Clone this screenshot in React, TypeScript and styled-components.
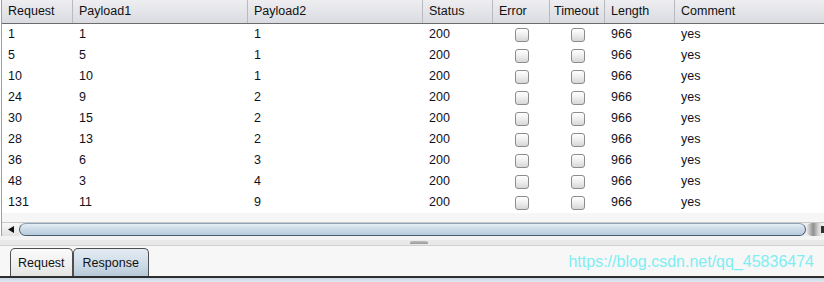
import React from "react";
import styled, { createGlobalStyle } from "styled-components";

const Global = createGlobalStyle`
  html, body { margin: 0; padding: 0; background: #ffffff; }
  body { width: 824px; height: 282px; overflow: hidden; font-family: "Liberation Sans", Arial, sans-serif; }
`;

const COLS = "71px 175px 175px 70px 57px 55px 70px 1fr";

const Page = styled.div`
  width: 824px;
  height: 282px;
  display: flex;
  flex-direction: column;
  background: #ffffff;
`;

const TablePanel = styled.div`
  margin-left: 1px;
  border-left: 1px solid #a0a0a0;
  display: flex;
  flex-direction: column;
  background: #f6f6f6;
  height: 236px;
`;

const HeaderRow = styled.div`
  display: grid;
  grid-template-columns: ${COLS};
  height: 23px;
  background: linear-gradient(#eeeef1 0%, #e4e5e9 50%, #dadbe1 100%);
  border-bottom: 1px solid #6b6b6b;
`;

const HeaderCell = styled.div<{ $tight?: boolean }>`
  box-sizing: border-box;
  border-right: 1px solid #b9b9c0;
  padding-left: ${(p) => (p.$tight ? "4px" : "6px")};
  font-size: 12.5px;
  line-height: 23px;
  color: #111;
  white-space: nowrap;
  overflow: hidden;
  &:last-child { border-right: none; }
`;

const Body = styled.div`
  background: #ffffff;
`;

const Row = styled.div`
  display: grid;
  grid-template-columns: ${COLS};
  height: 21px;
`;

const Cell = styled.div<{ $center?: boolean }>`
  padding-left: ${(p) => (p.$center ? "0" : "6px")};
  font-size: 12.5px;
  line-height: 21px;
  color: #10101c;
  display: flex;
  align-items: center;
  justify-content: ${(p) => (p.$center ? "center" : "flex-start")};
`;

const Check = styled.span`
  width: 12px;
  height: 12px;
  border: 1px solid #8c8c8c;
  border-radius: 3px;
  background: linear-gradient(#ffffff 0%, #eeeeee 50%, #d6d6d6 100%);
  box-sizing: content-box;
`;

const Spacer = styled.div`
  height: 9px;
  background: #f6f6f6;
`;

const Scrollbar = styled.div`
  height: 14px;
  display: flex;
  align-items: stretch;
  background: #ededed;
  border-top: 1px solid #c9c9c9;
`;

const ArrowBtn = styled.div`
  width: 17px;
  display: flex;
  align-items: center;
  justify-content: center;
  background: linear-gradient(#f8f8f8, #e2e2e2);
`;

const Thumb = styled.div`
  flex: 1;
  border: 1px solid #4a5c6e;
  border-top-color: #8fa3b6;
  border-radius: 9px;
  background: linear-gradient(#e4edf5 0%, #cddbe8 45%, #b8cbdc 100%);
`;

const RightCap = styled.div`
  width: 18px;
  display: flex;
  align-items: stretch;
  justify-content: flex-end;
  background: linear-gradient(90deg, #f0f0f0, #8f8f8f 40%, #d8d8d8 70%, #f4f4f4);
  border-radius: 6px 0 0 6px;
`;

const CapMark = styled.div`
  width: 3px;
  margin: 3px 0;
  background: #303030;
`;

const BottomPanel = styled.div`
  flex: 1;
  display: flex;
  flex-direction: column;
  background: #f5f5f5;
`;

const Divider = styled.div`
  height: 5px;
  border-top: 4px solid #f3f3f3;
  border-bottom: 1px solid #d0d0d0;
  display: flex;
  justify-content: center;
  background: #e8e8e8;
`;

const Grip = styled.div`
  width: 18px;
  height: 3px;
  margin-top: 1px;
  margin-left: 14px;
  border-radius: 2px 2px 0 0;
  background: linear-gradient(#bdbdbd, #9a9a9a);
`;

const TabBar = styled.div`
  display: flex;
  align-items: flex-end;
  justify-content: space-between;
  height: 30px;
  padding-left: 10px;
  padding-right: 10px;
  border-bottom: 2px solid #2e2e2e;
  background: #f7f7f7;
`;

const Tabs = styled.div`
  display: flex;
  align-items: flex-end;
`;

const Tab = styled.div<{ $active?: boolean }>`
  height: 28px;
  box-sizing: border-box;
  padding: 0 ${(p) => (p.$active ? "9px" : "7px")};
  border: 1px solid #4e4e4e;
  border-bottom: none;
  border-radius: 5px 5px 0 0;
  font-size: 12.5px;
  line-height: 28px;
  color: #111;
  background: ${(p) =>
    p.$active
      ? "linear-gradient(#e4ecf3 0%, #ccdae6 60%, #b7c9d8 100%)"
      : "linear-gradient(#fbfbfb 0%, #efefef 60%, #e3e3e3 100%)"};
`;

const Watermark = styled.div`
  font-size: 16px;
  line-height: 20px;
  margin-bottom: 4px;
  color: #7eeef2;
`;

const BottomEdge = styled.div`
  height: 4px;
  background: linear-gradient(#c7d6e4, #dfe8f0);
`;

const rows: [string, string, string][] = [
  ["1", "1", "1"],
  ["5", "5", "1"],
  ["10", "10", "1"],
  ["24", "9", "2"],
  ["30", "15", "2"],
  ["28", "13", "2"],
  ["36", "6", "3"],
  ["48", "3", "4"],
  ["131", "11", "9"],
];

const headers = ["Request", "Payload1", "Payload2", "Status", "Error", "Timeout", "Length", "Comment"];

export default function App() {
  return (
    <Page>
      <Global />
      <TablePanel>
        <HeaderRow>
          {headers.map((h) => (
            <HeaderCell key={h} $tight={h === "Timeout"}>
              {h}
            </HeaderCell>
          ))}
        </HeaderRow>
        <Body>
          {rows.map((r, i) => (
            <Row key={i}>
              <Cell>{r[0]}</Cell>
              <Cell>{r[1]}</Cell>
              <Cell>{r[2]}</Cell>
              <Cell>200</Cell>
              <Cell $center>
                <Check />
              </Cell>
              <Cell $center>
                <Check />
              </Cell>
              <Cell>966</Cell>
              <Cell>yes</Cell>
            </Row>
          ))}
        </Body>
        <Spacer />
        <Scrollbar>
          <ArrowBtn>
            <svg width="6" height="7" viewBox="0 0 6 7">
              <path d="M0 3.5 L6 0 L6 7 Z" fill="#111" />
            </svg>
          </ArrowBtn>
          <Thumb />
          <RightCap>
            <CapMark />
          </RightCap>
        </Scrollbar>
      </TablePanel>
      <BottomPanel>
        <Divider>
          <Grip />
        </Divider>
        <TabBar>
          <Tabs>
            <Tab>Request</Tab>
            <Tab $active>Response</Tab>
          </Tabs>
          <Watermark>https://blog.csdn.net/qq_45836474</Watermark>
        </TabBar>
        <BottomEdge />
      </BottomPanel>
    </Page>
  );
}
